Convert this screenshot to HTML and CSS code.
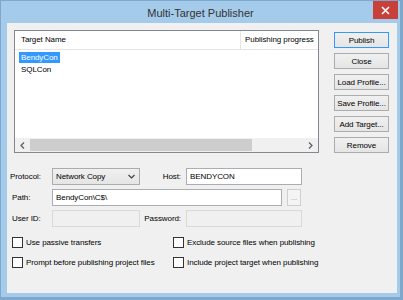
FILE: index.html
```html
<!DOCTYPE html>
<html lang="en">
<head>
    <meta charset="UTF-8">
    <title>Multi-Target Publisher</title>
    <link rel="stylesheet" href="styles.css">
</head>
<body>
    <div class="window">
        <div class="titlebar">
            <span class="title">Multi-Target Publisher</span>
            <span class="close">
                <svg width="9" height="9" viewBox="0 0 9 9"><path d="M1 1 L8 8 M8 1 L1 8" stroke="#fff" stroke-width="1.6"/></svg>
            </span>
        </div>
        <div class="client">
            <div class="top">
                <div class="list">
                    <div class="list-head">
                        <div class="col-name">Target Name</div>
                        <div class="col-progress">Publishing progress</div>
                    </div>
                    <div class="list-body">
                        <div class="item"><span class="selected">BendyCon</span></div>
                        <div class="item"><span>SQLCon</span></div>
                    </div>
                    <div class="hscroll">
                        <span class="arrow">
                            <svg width="5" height="7" viewBox="0 0 5 7"><path d="M4 0.5 L1 3.5 L4 6.5" fill="none" stroke="#606060" stroke-width="1.3"/></svg>
                        </span>
                        <div class="track"><div class="thumb"></div></div>
                        <span class="arrow">
                            <svg width="5" height="7" viewBox="0 0 5 7"><path d="M1 0.5 L4 3.5 L1 6.5" fill="none" stroke="#606060" stroke-width="1.3"/></svg>
                        </span>
                    </div>
                </div>
                <div class="actions">
                    <button class="btn default">Publish</button>
                    <button class="btn">Close</button>
                    <button class="btn">Load Profile...</button>
                    <button class="btn">Save Profile...</button>
                    <button class="btn">Add Target...</button>
                    <button class="btn">Remove</button>
                </div>
            </div>

            <div class="form">
                <label class="lbl">Protocol:</label>
                <div class="select">
                    <span>Network Copy</span>
                    <svg width="7" height="5" viewBox="0 0 7 5"><path d="M0.5 1 L3.5 4 L6.5 1" fill="none" stroke="#404040" stroke-width="1.2"/></svg>
                </div>
                <label class="lbl right">Host:</label>
                <div class="input">BENDYCON</div>

                <label class="lbl indent">Path:</label>
                <div class="path">
                    <div class="input wide">BendyCon\C$\</div>
                    <button class="browse">...</button>
                </div>

                <label class="lbl indent">User ID:</label>
                <div class="input disabled"></div>
                <label class="lbl right">Password:</label>
                <div class="input disabled"></div>
            </div>

            <div class="options">
                <label class="check"><span class="box"></span>Use passive transfers</label>
                <label class="check"><span class="box"></span>Exclude source files when publishing</label>
                <label class="check"><span class="box"></span>Prompt before publishing project files</label>
                <label class="check"><span class="box"></span>Include project target when publishing</label>
            </div>
        </div>
    </div>
</body>
</html>
```

FILE: styles.css
```css
body {
    margin: 0;
    background: #fff;
    font-family: "Liberation Sans", Arial, sans-serif;
    font-size: 8px;
    letter-spacing: -0.08px;
    color: #000;
}
.window {
    width: 403px;
    height: 300px;
    box-sizing: border-box;
    background: #a5cbea;
    border: 1px solid #7ea7cd;
    border-right-width: 3px;
    border-bottom-width: 3px;
    display: flex;
    flex-direction: column;
}
.titlebar {
    height: 22px;
    display: grid;
    grid-template-columns: 1fr auto 1fr;
    align-items: start;
}
.title {
    grid-column: 2;
    font-size: 11px;
    letter-spacing: 0;
    color: #333;
    line-height: 22px;
    padding-top: 1px;
}
.close {
    grid-column: 3;
    justify-self: end;
    width: 25px;
    height: 18px;
    margin-right: 2px;
    background: #c7403a;
    display: flex;
    align-items: center;
    justify-content: center;
}
.client {
    flex: 1;
    margin: 0 3px 4px 6px;
    background: #f0f0f0;
    padding-top: 7px;
}
.top {
    display: flex;
    margin-left: 7px;
}
.list {
    width: 305px;
    height: 123px;
    box-sizing: border-box;
    border: 1px solid #828790;
    background: #fff;
    display: flex;
    flex-direction: column;
}
.list-head {
    display: flex;
    height: 18px;
    border-bottom: 1px solid #e5e5e5;
    line-height: 18px;
}
.col-name {
    width: 219px;
    padding-left: 6px;
    border-right: 1px solid #e5e5e5;
}
.col-progress {
    padding-left: 4px;
}
.list-body {
    flex: 1;
    padding: 2px 0 0 4px;
}
.item {
    height: 12px;
}
.item span {
    display: inline-block;
    padding: 0 2px;
    line-height: 11px;
}
.item .selected {
    background: #3399ff;
    color: #fff;
}
.hscroll {
    height: 14px;
    display: flex;
    background: #f0f0f0;
}
.arrow {
    width: 15px;
    display: flex;
    align-items: center;
    justify-content: center;
}
.track {
    flex: 1;
    padding: 1px 0;
}
.thumb {
    width: 222px;
    height: 12px;
    background: #cdcdcd;
}
.actions {
    display: flex;
    flex-direction: column;
    gap: 5px;
    margin-left: 15px;
    padding-top: 2px;
}
.btn {
    width: 55px;
    height: 16px;
    padding: 0;
    border: 1px solid #acacac;
    background: linear-gradient(#f0f0f0, #e5e5e5);
    font-family: inherit;
    font-size: 8px;
    letter-spacing: -0.08px;
    color: #000;
}
.btn.default {
    border-color: #3399ff;
}
.form {
    margin-top: 15px;
    padding-left: 3px;
    display: grid;
    grid-template-columns: 42px 88px 46px 116px;
    grid-auto-rows: 17px;
    row-gap: 4px;
    align-items: center;
}
.lbl.indent {
    padding-left: 2px;
}
.lbl.right {
    text-align: right;
    padding-right: 5px;
}
.select {
    height: 17px;
    box-sizing: border-box;
    border: 1px solid #acacac;
    background: linear-gradient(#f0f0f0, #e5e5e5);
    display: flex;
    align-items: center;
    justify-content: space-between;
    padding: 0 4px 0 3px;
}
.input {
    height: 17px;
    box-sizing: border-box;
    border: 1px solid #abadb3;
    background: #fff;
    padding-left: 3px;
    line-height: 15px;
}
.input.disabled {
    background: #f0f0f0;
    border-color: #d9d9d9;
}
.path {
    grid-column: span 3;
    display: flex;
    gap: 5px;
}
.input.wide {
    width: 230px;
}
.browse {
    width: 14px;
    height: 17px;
    padding: 0;
    border: 1px solid #cfcfcf;
    background: #f4f4f4;
    color: #9a9a9a;
    font-family: inherit;
    font-size: 8px;
}
.options {
    margin-top: 10px;
    padding-left: 5px;
    display: grid;
    grid-template-columns: 161px auto;
    row-gap: 9px;
}
.check {
    display: flex;
    align-items: center;
    gap: 3px;
    height: 11px;
}
.box {
    width: 11px;
    height: 11px;
    box-sizing: border-box;
    border: 1px solid #333;
    background: #fff;
}
```
